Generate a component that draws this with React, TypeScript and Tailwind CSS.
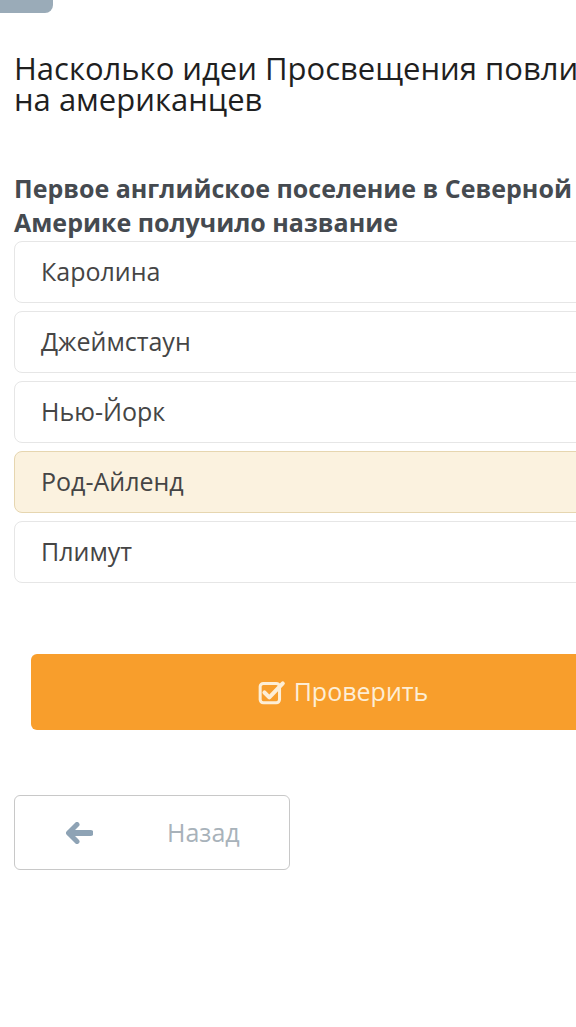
import React from "react";

const options = ["Каролина", "Джеймстаун", "Нью-Йорк", "Род-Айленд", "Плимут"];
const selected = 3;

const CheckIcon = () => (
  <svg width="28" height="26" viewBox="0 0 26 24" fill="none">
    <rect x="2" y="4" width="18" height="18" rx="3" stroke="currentColor" strokeWidth="2.8" />
    <path d="M6 12.5l4.5 4.5L23 4" stroke="currentColor" strokeWidth="3.8" strokeLinecap="round" strokeLinejoin="round" />
  </svg>
);

const ArrowIcon = () => (
  <svg width="27" height="22" viewBox="0 0 27 22" className="ml-[51px] text-[#8ea3b5]">
    <path
      d="M11 2.5 L2.5 11 L11 19.5"
      fill="none"
      stroke="currentColor"
      strokeWidth="5"
      strokeLinecap="round"
      strokeLinejoin="round"
    />
    <path d="M4 11 H24.5" stroke="currentColor" strokeWidth="6" strokeLinecap="round" />
  </svg>
);

const App: React.FC = () => {
  return (
    <div
      className="w-[576px] h-[1027px] overflow-hidden bg-white"
      style={{ fontFamily: '"Open Sans", "Noto Sans", sans-serif' }}
    >
      <div className="w-[680px]">
        <div className="w-[53px] h-[13px] bg-[#9aabb8] rounded-br-[8px]" />

        <h1 className="mt-[40px] ml-[14px] w-[620px] text-[31px] leading-[31px] text-[#1f1f1f] font-normal">
          Насколько идеи Просвещения повлияли на американцев
        </h1>

        <h2 className="mt-[56px] ml-[14px] w-[620px] text-[25px] leading-[34px] font-bold text-[#454a50]">
          Первое английское поселение в Северной Америке получило название
        </h2>

        <div className="ml-[14px] mt-[2px] flex flex-col gap-[8px]">
          {options.map((opt, i) => (
            <div
              key={opt}
              className={
                i === selected
                  ? "h-[62px] flex items-center pl-[26px] rounded-[8px] border border-[#e6d6b0] bg-[#fbf2df] text-[25px] text-[#454545]"
                  : "h-[62px] flex items-center pl-[26px] rounded-[8px] border border-[#e6e6e6] bg-white text-[25px] text-[#454545]"
              }
            >
              {opt}
            </div>
          ))}
        </div>

        <button className="mt-[71px] ml-[31px] w-[624px] h-[76px] rounded-[6px] bg-[#f89e2c] flex items-center justify-center gap-[8px] text-[25px] text-[#fdeed6]">
          <CheckIcon />
          Проверить
        </button>

        <button className="mt-[65px] ml-[14px] w-[276px] h-[75px] rounded-[6px] border border-[#c8c8c8] bg-white flex items-center text-[25px] text-[#a8b2ba]">
          <ArrowIcon />
          <span className="ml-[74px]">Назад</span>
        </button>
      </div>
    </div>
  );
};

export default App;
